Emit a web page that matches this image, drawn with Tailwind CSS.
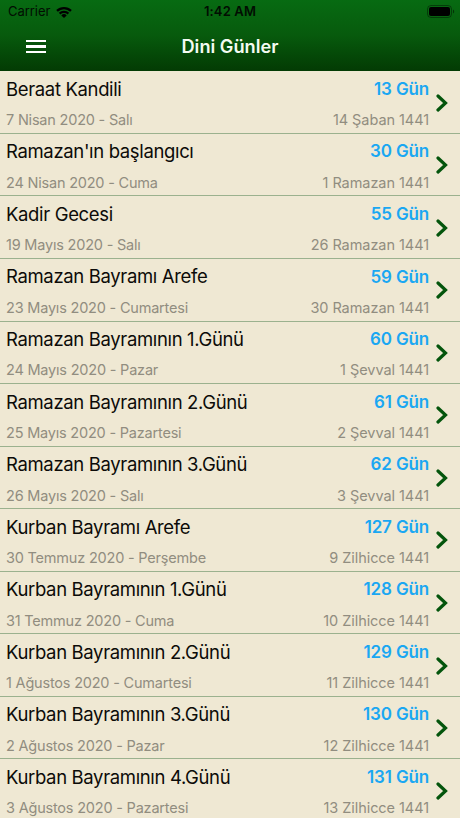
<!DOCTYPE html>
<html lang="tr">
<head>
    <meta charset="UTF-8">
    <title>Dini Günler</title>
    <script src="https://cdn.jsdelivr.net/npm/@tailwindcss/browser@4"></script>
</head>
<body class="h-screen overflow-hidden bg-[#efe8d3] font-['Inter',sans-serif]">
    <header class="h-[71.4px] bg-linear-to-b from-[#076b12] via-[#075a0d] to-[#033b04]">
        <div class="grid h-6 grid-cols-3 items-center pl-2 pr-[5px] text-[#020d02]">
            <div class="flex items-center gap-[6px]">
                <span class="text-[13px] tracking-[-0.05px]">Carrier</span>
                <svg class="mb-px h-3 w-4" viewBox="0 0 16 12">
                    <path d="M0.2 4.1a11.2 11.2 0 0 1 15.6 0l-1.6 1.7a8.9 8.9 0 0 0-12.4 0z" />
                    <path d="M2.8 6.8a7.5 7.5 0 0 1 10.4 0l-1.6 1.7a5.2 5.2 0 0 0-7.2 0z" />
                    <path d="M5.3 9.4a3.9 3.9 0 0 1 5.4 0L8 12z" />
                </svg>
            </div>
            <span class="-ml-[3px] text-center text-[13px] font-semibold tracking-[0.15px]">1:42 AM</span>
            <svg class="mb-px h-[13px] w-7 justify-self-end" viewBox="0 0 28 13">
                <rect x="0.5" y="0.5" width="24" height="12" rx="3.5" fill="none" stroke="#000" stroke-opacity="0.4" />
                <rect x="2" y="2" width="21" height="9" rx="2" />
                <path d="M26 4.5c1.6 0.6 1.6 3.4 0 4z" fill-opacity="0.5" />
            </svg>
        </div>
        <div class="grid h-[45px] grid-cols-3 items-center">
            <button class="ml-[26px] flex w-[20px] flex-col gap-[3.5px]">
                <span class="h-[2.3px] bg-white"></span>
                <span class="h-[2.3px] bg-white"></span>
                <span class="h-[2.3px] bg-white"></span>
            </button>
            <h1 class="text-center text-[18.2px] font-semibold text-[#f4fbf2]">Dini Günler</h1>
        </div>
    </header>

    <ul id="days"></ul>

    <script>
        const days = [
            ['Beraat Kandili', '7 Nisan 2020 - Salı', 13, '14 Şaban 1441'],
            ["Ramazan'ın başlangıcı", '24 Nisan 2020 - Cuma', 30, '1 Ramazan 1441'],
            ['Kadir Gecesi', '19 Mayıs 2020 - Salı', 55, '26 Ramazan 1441'],
            ['Ramazan Bayramı Arefe', '23 Mayıs 2020 - Cumartesi', 59, '30 Ramazan 1441'],
            ['Ramazan Bayramının 1.Günü', '24 Mayıs 2020 - Pazar', 60, '1 Şevval 1441'],
            ['Ramazan Bayramının 2.Günü', '25 Mayıs 2020 - Pazartesi', 61, '2 Şevval 1441'],
            ['Ramazan Bayramının 3.Günü', '26 Mayıs 2020 - Salı', 62, '3 Şevval 1441'],
            ['Kurban Bayramı Arefe', '30 Temmuz 2020 - Perşembe', 127, '9 Zilhicce 1441'],
            ['Kurban Bayramının 1.Günü', '31 Temmuz 2020 - Cuma', 128, '10 Zilhicce 1441'],
            ['Kurban Bayramının 2.Günü', '1 Ağustos 2020 - Cumartesi', 129, '11 Zilhicce 1441'],
            ['Kurban Bayramının 3.Günü', '2 Ağustos 2020 - Pazar', 130, '12 Zilhicce 1441'],
            ['Kurban Bayramının 4.Günü', '3 Ağustos 2020 - Pazartesi', 131, '13 Zilhicce 1441']
        ];

        document.getElementById('days').innerHTML = days.map(([name, date, left, hijri]) => `
            <li class="flex h-[62.55px] items-center border-b border-[#9bb18e] pl-[6px] pr-3">
                <div class="flex-1 pt-[5px]">
                    <div class="flex h-[31px] items-center justify-between">
                        <span class="text-[18.5px] tracking-[-0.35px] text-[#0c0b08]">${name}</span>
                        <span class="text-[17px] font-semibold tracking-[-0.15px] text-[#1aa7f2]">${left} Gün</span>
                    </div>
                    <div class="flex h-[30px] items-center justify-between text-[14.5px] text-[#918d80]">
                        <span class="tracking-[-0.2px]">${date}</span>
                        <span class="tracking-[-0.06px]">${hijri}</span>
                    </div>
                </div>
                <svg class="ml-[7px] mt-px h-[18px] w-3" viewBox="0 0 12 18" fill="none" stroke="#04550c" stroke-width="3.2" stroke-linecap="round">
                    <path d="M2 2L9.5 9L2 16" />
                </svg>
            </li>
        `).join('');
    </script>
</body>
</html>
